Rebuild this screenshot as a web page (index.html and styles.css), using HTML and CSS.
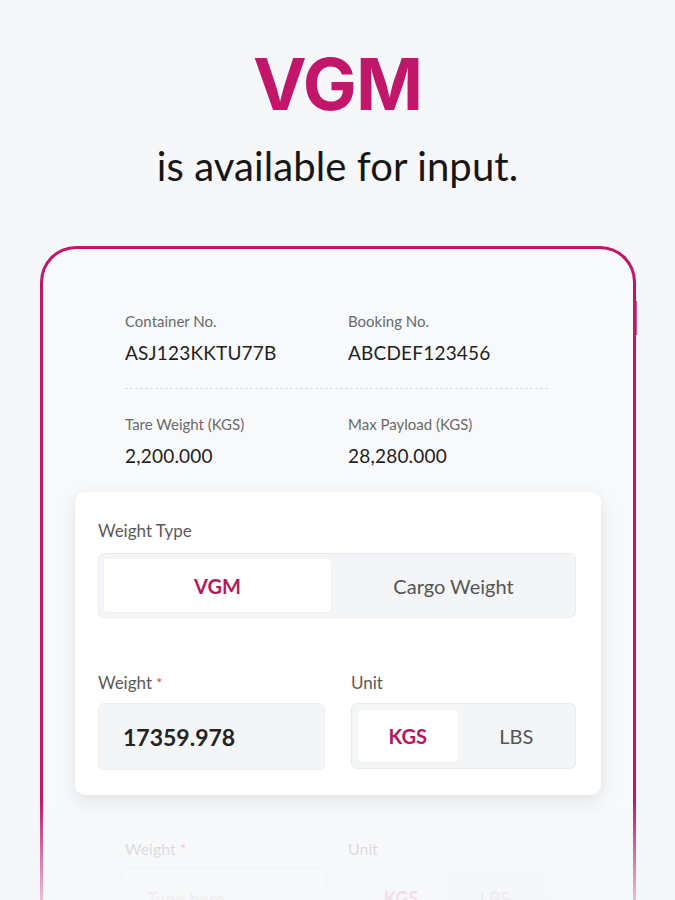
FILE: index.html
```html
<!DOCTYPE html>
<html lang="en">
<head>
<meta charset="utf-8">
<title>VGM</title>
<link rel="stylesheet" href="styles.css">
</head>
<body>
<header class="hero">
  <h1 class="hero-title">VGM</h1>
  <p class="hero-sub">is available for input.</p>
</header>
<section class="phone">
  <span class="side-btn"></span>
  <div class="info">
    <div class="info-row">
      <div class="info-item">
        <div class="info-label">Container No.</div>
        <div class="info-value">ASJ123KKTU77B</div>
      </div>
      <div class="info-item">
        <div class="info-label">Booking No.</div>
        <div class="info-value">ABCDEF123456</div>
      </div>
    </div>
    <div class="divider"></div>
    <div class="info-row">
      <div class="info-item">
        <div class="info-label">Tare Weight (KGS)</div>
        <div class="info-value">2,200.000</div>
      </div>
      <div class="info-item">
        <div class="info-label">Max Payload (KGS)</div>
        <div class="info-value">28,280.000</div>
      </div>
    </div>
  </div>

  <div class="card">
    <div class="field-label">Weight Type</div>
    <div class="seg seg-type">
      <div class="seg-opt is-active">VGM</div>
      <div class="seg-opt">Cargo Weight</div>
    </div>
    <div class="field-row">
      <div class="field">
        <div class="field-label">Weight <span class="req">*</span></div>
        <div class="input">17359.978</div>
      </div>
      <div class="field">
        <div class="field-label">Unit</div>
        <div class="seg seg-unit">
          <div class="seg-opt is-active">KGS</div>
          <div class="seg-opt">LBS</div>
        </div>
      </div>
    </div>
  </div>

  <div class="ghost">
    <div class="ghost-field">
      <div class="ghost-label">Weight <span class="req">*</span></div>
      <div class="ghost-input">Type here</div>
    </div>
    <div class="ghost-field">
      <div class="ghost-label">Unit</div>
      <div class="ghost-seg">
        <div class="ghost-opt is-active">KGS</div>
        <div class="ghost-opt">LBS</div>
      </div>
    </div>
  </div>
</section>
<div class="fade"></div>
</body>
</html>
```

FILE: styles.css
```css
* { box-sizing: border-box; }

html, body {
  margin: 0;
  padding: 0;
}

body {
  width: 675px;
  height: 900px;
  overflow: hidden;
  background: #f6f7f9;
  font-family: "Lato", "Liberation Sans", sans-serif;
  color: #1f1f1f;
  position: relative;
}

.hero {
  height: 246px;
  padding-top: 48px;
  text-align: center;
}

.hero-title {
  margin: 0;
  font-family: "Inter", "Lato", sans-serif;
  font-weight: 700;
  font-size: 72px;
  line-height: 72px;
  letter-spacing: -1px;
  color: #c2166b;
}

.hero-sub {
  margin: 22px 0 0;
  font-size: 40px;
  line-height: 48px;
  font-weight: 400;
  letter-spacing: 0.1px;
  color: #161616;
}

.phone {
  position: relative;
  margin-left: 40px;
  width: 596px;
  height: 700px;
  border: 3px solid #c2166b;
  border-bottom: none;
  border-radius: 36px 36px 0 0;
  background: #f8f9fb;
  padding-top: 63px;
}

.side-btn {
  position: absolute;
  right: -4px;
  top: 52px;
  width: 1px;
  height: 34px;
  background: #c2166b;
  opacity: 0.7;
}

.info {
  padding: 0 85px 0 82px;
}

.info-row {
  display: grid;
  grid-template-columns: 223px 1fr;
}

.info-label {
  font-size: 15px;
  line-height: 18px;
  color: #6a6a6a;
}

.info-value {
  margin-top: 11px;
  font-size: 19px;
  line-height: 24px;
  letter-spacing: 0.2px;
  color: #1f1f1f;
}

.divider {
  margin: 23px 0 26px;
  border-top: 1px dashed #dcdde0;
}

.card {
  margin: 24px 32px 0;
  background: #ffffff;
  border-radius: 10px;
  box-shadow: 0 8px 22px rgba(0, 0, 0, 0.08), 0 0 10px rgba(0, 0, 0, 0.03);
  padding: 29px 25px 25px 23px;
}

.field-label {
  font-size: 17px;
  line-height: 20px;
  color: #5a5a5a;
  margin-bottom: 12px;
}

.req {
  color: #e0384f;
  font-size: 14px;
  vertical-align: top;
}

.seg {
  display: grid;
  grid-template-columns: 1fr 1fr;
  background: #f4f5f7;
  border: 1px solid #e9ebee;
  border-radius: 6px;
  padding: 5px;
}

.seg-type {
  height: 65px;
}

.seg-unit {
  height: 66px;
  padding: 6px;
}

.seg-opt {
  display: flex;
  align-items: center;
  justify-content: center;
  font-size: 20px;
  color: #555;
  border-radius: 4px;
}

.seg-opt.is-active {
  background: #ffffff;
  color: #b8175e;
  font-weight: 700;
  box-shadow: 0 1px 2px rgba(0, 0, 0, 0.03);
}

.seg-type .seg-opt.is-active {
  margin-right: 6px;
}

.seg-unit .seg-opt.is-active {
  margin-right: 6px;
}

.field-row {
  display: grid;
  grid-template-columns: 227px 1fr;
  column-gap: 26px;
  margin-top: 55px;
}

.field-row .field-label {
  margin-bottom: 10px;
}

.input {
  height: 67px;
  background: #f4f5f7;
  border: 1px solid #eceef0;
  border-radius: 6px;
  padding-left: 24px;
  display: flex;
  align-items: center;
  font-size: 23px;
  font-weight: 700;
  color: #232323;
}

.ghost {
  display: grid;
  grid-template-columns: 201px 200px;
  column-gap: 22px;
  margin: 44px 0 0 82px;
  opacity: 0.4;
}

.ghost-label {
  font-size: 16px;
  line-height: 20px;
  color: #8a8a8a;
  margin-bottom: 9px;
}

.ghost-input {
  height: 60px;
  margin-left: -3px;
  border: 1px solid #e6e7ea;
  border-radius: 5px;
  background: #ffffff;
  padding-left: 24px;
  display: flex;
  align-items: center;
  font-size: 18px;
  color: #9a9a9a;
}

.ghost-seg {
  height: 60px;
  display: grid;
  grid-template-columns: 1fr 1fr;
  border: 1px solid #e6e7ea;
  border-radius: 5px;
  background: #f4f5f7;
  padding: 5px;
}

.ghost-opt {
  display: flex;
  align-items: center;
  justify-content: center;
  font-size: 18px;
  color: #888;
}

.ghost-opt.is-active {
  background: #ffffff;
  color: #c2166b;
  font-weight: 700;
}

.fade {
  position: absolute;
  left: 0;
  right: 0;
  top: 800px;
  height: 100px;
  background: linear-gradient(to bottom, rgba(246, 247, 249, 0) 0%, rgba(246, 247, 249, 0.75) 100%);
  pointer-events: none;
}
```
